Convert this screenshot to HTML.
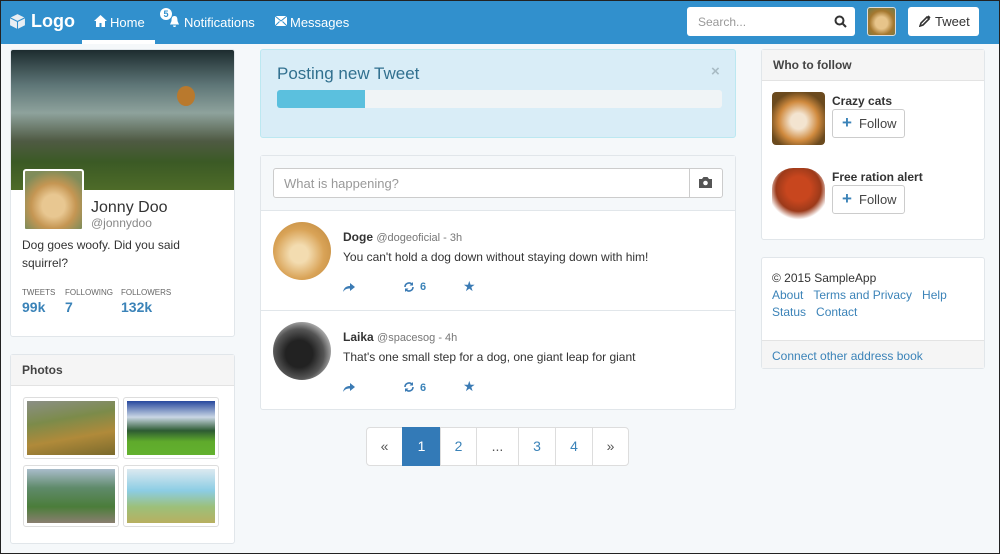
<!DOCTYPE html>
<html><head><meta charset="utf-8"><style>
*{box-sizing:border-box;margin:0;padding:0}
body{width:1000px;height:554px;overflow:hidden;background:#f5f8fa;font-family:"Liberation Sans",sans-serif;font-size:12px;color:#333;position:relative}
.a{position:absolute}
.nav{left:0;top:0;width:1000px;height:44px;background:#3190cd}
.nav span{color:#fff;position:absolute;font-size:13px}
.panel{background:#fff;border:1px solid #e1e6ea;border-radius:3px;position:absolute}
.hd{background:#f5f5f5;border-bottom:1px solid #e3e3e3;font-weight:bold;color:#444;font-size:12px;padding-left:11px}
.blue{color:#3b83b8}
.pg{position:absolute;top:427px;height:39px;border:1px solid #ddd;background:#fff;color:#3b83b8;font-size:14px;text-align:center;line-height:37px}
.btn{position:absolute;border:1px solid #ccc;border-radius:3px;background:#fff;font-size:13px;color:#444}
.ph{position:absolute;border:1px solid #ddd;border-radius:3px;background:#fff;padding:3px}
.ph div{width:100%;height:100%}
</style></head><body>
<div class="a nav">
<svg class="a" style="left:9px;top:13px" width="17" height="17" viewBox="0 0 16 16"><path d="M8 1l7 3.5v7L8 15 1 11.5v-7z" fill="#e8eef3"/><path d="M1 4.5L8 8l7-3.5M8 8v7" stroke="#3190cd" stroke-width="1" fill="none"/></svg>
<span style="left:31px;top:11px;font-size:18px;font-weight:bold">Logo</span>
<svg class="a" style="left:94px;top:15px" width="13" height="12" viewBox="0 0 13 12"><path d="M6.5 0L0 6h2v6h3.5V8h2v4H11V6h2z" fill="#fff"/></svg>
<span style="left:110px;top:15px">Home</span>
<div class="a" style="left:82px;top:40px;width:73px;height:4px;background:#fff"></div>
<div class="a" style="left:160px;top:8px;width:12px;height:12px;border-radius:6px;background:#fff;color:#3190cd;font-size:9px;text-align:center;line-height:12px;font-weight:bold">5</div>
<svg class="a" style="left:168px;top:15px" width="13" height="13" viewBox="0 0 13 13"><path d="M6.5 1C4 1 3.5 3 3.5 6L2 9.5h9L9.5 6C9.5 3 9 1 6.5 1zM5 10.5a1.5 1.5 0 003 0z" fill="#fff"/></svg>
<span style="left:184px;top:15px">Notifications</span>
<svg class="a" style="left:275px;top:16px" width="12" height="10" viewBox="0 0 12 10"><rect width="12" height="10" fill="#fff"/><path d="M0 0l6 5 6-5M0 10l4.5-4.5M12 10L7.5 5.5" stroke="#3190cd" fill="none"/></svg>
<span style="left:290px;top:15px">Messages</span>
<div class="a" style="left:687px;top:7px;width:168px;height:29px;background:#fff;border-radius:3px"><span style="left:11px;top:8px;color:#999;font-size:12px">Search...</span>
<svg class="a" style="left:147px;top:8px" width="13" height="13" viewBox="0 0 13 13"><circle cx="5.5" cy="5.5" r="4" stroke="#333" stroke-width="2" fill="none"/><path d="M8.5 8.5l3.5 3.5" stroke="#333" stroke-width="2"/></svg></div>
<div class="a" style="left:867px;top:7px;width:29px;height:29px;border-radius:3px;border:1px solid #ddd;background:radial-gradient(circle at 50% 55%,#e7c48a 30%,#a5782f 60%,#6d7a4a)"></div>
<div class="a" style="left:908px;top:7px;width:71px;height:29px;background:#fff;border-radius:3px;font-size:13px;color:#333;line-height:29px;padding-left:27px">Tweet</div>
<svg class="a" style="left:919px;top:15px" width="12" height="12" viewBox="0 0 12 12"><path d="M1 11l1-3 6-6 2 2-6 6zM9 1l2 2" stroke="#333" stroke-width="1.6" fill="none"/></svg>
</div>

<div class="panel" style="left:10px;top:49px;width:225px;height:288px;overflow:hidden">
<div style="height:140px;background:linear-gradient(180deg,#1d2c2f 0%,#5e7677 25%,#8ea29c 45%,#4f5a43 65%,#3b5a25 80%,#4e6b28 100%)"></div>
<div class="a" style="left:166px;top:36px;width:18px;height:20px;border-radius:50%;background:#b9792d"></div>
<div class="a" style="left:12px;top:119px;width:61px;height:62px;border:2px solid #fff;border-radius:3px;background:radial-gradient(circle at 50% 60%,#e8c791 25%,#c59653 50%,#7f8c5a 80%)"></div>
<div class="a" style="left:80px;top:149px;font-size:16px;color:#333">Jonny Doo</div>
<div class="a" style="left:80px;top:166px;font-size:12px;color:#888">@jonnydoo</div>
<div class="a" style="left:11px;top:186px;font-size:12px;line-height:18px;width:200px">Dog goes woofy. Did you said squirrel?</div>
<div class="a" style="left:11px;top:238px;font-size:8px;color:#666">TWEETS</div>
<div class="a" style="left:54px;top:238px;font-size:8px;color:#666">FOLLOWING</div>
<div class="a" style="left:110px;top:238px;font-size:8px;color:#666">FOLLOWERS</div>
<div class="a blue" style="left:11px;top:249px;font-size:14px;font-weight:bold">99k</div>
<div class="a blue" style="left:54px;top:249px;font-size:14px;font-weight:bold">7</div>
<div class="a blue" style="left:110px;top:249px;font-size:14px;font-weight:bold">132k</div>
</div>

<div class="panel" style="left:10px;top:354px;width:225px;height:190px">
<div class="hd" style="height:31px;line-height:31px">Photos</div>
<div class="ph" style="left:12px;top:42px;width:96px;height:62px"><div style="background:linear-gradient(170deg,#8b8f86 0%,#7c8b4a 35%,#b08a3a 65%,#7a6a2c)"></div></div>
<div class="ph" style="left:112px;top:42px;width:96px;height:62px"><div style="background:linear-gradient(180deg,#27489e 0%,#c9d6e4 30%,#2d5b33 55%,#5faa2c 75%,#63b12e)"></div></div>
<div class="ph" style="left:12px;top:110px;width:96px;height:62px"><div style="background:linear-gradient(180deg,#a9bccb 0%,#5f8a6a 35%,#4b7d3a 70%,#8a7f70)"></div></div>
<div class="ph" style="left:112px;top:110px;width:96px;height:62px"><div style="background:linear-gradient(180deg,#dce9f0 0%,#8ccde4 40%,#9cc07a 70%,#b8b060)"></div></div>
</div>

<div class="a" style="left:260px;top:49px;width:476px;height:89px;background:#d9edf7;border:1px solid #bce8f1;border-radius:3px">
<div class="a" style="left:16px;top:14px;font-size:17px;color:#31708f">Posting new Tweet</div>
<div class="a" style="left:450px;top:13px;font-size:15px;color:#a9bcc5;font-weight:bold">×</div>
<div class="a" style="left:16px;top:40px;width:445px;height:18px;background:#f0f4f6;border-radius:3px;overflow:hidden"><div style="width:88px;height:100%;background:#5bc0de"></div></div>
</div>

<div class="panel" style="left:260px;top:155px;width:476px;height:255px">
<div style="height:55px;background:#f5f8fa;border-bottom:1px solid #e1e6ea"></div>
<div class="a" style="left:12px;top:12px;width:450px;height:30px;background:#fff;border:1px solid #ccc;border-radius:3px"><span class="a" style="left:10px;top:7px;color:#999;font-size:13px">What is happening?</span>
<div class="a" style="left:415px;top:0;width:33px;height:28px;border-left:1px solid #ccc"></div>
<svg class="a" style="left:425px;top:8px" width="13" height="11" viewBox="0 0 13 11"><path d="M0 2h3l1.5-2h4L10 2h3v9H0z" fill="#555"/><circle cx="6.5" cy="6" r="2.3" fill="#fff"/></svg></div>

<div class="a" style="left:12px;top:66px;width:58px;height:58px;border-radius:50%;background:radial-gradient(circle at 45% 55%,#f3dcb0 20%,#d9a357 55%,#b98339)"></div>
<div class="a" style="left:82px;top:74px;font-size:12px"><b>Doge</b> <span style="color:#777;font-size:11px">@dogeoficial - 3h</span></div>
<div class="a" style="left:82px;top:94px;font-size:12px">You can't hold a dog down without staying down with him!</div>
<div class="a" style="left:0;top:154px;width:474px;border-top:1px solid #e1e6ea"></div>
<div class="a" style="left:12px;top:166px;width:58px;height:58px;border-radius:50%;background:radial-gradient(circle at 45% 55%,#222 30%,#555 55%,#ccc 80%)"></div>
<div class="a" style="left:82px;top:174px;font-size:12px"><b>Laika</b> <span style="color:#777;font-size:11px">@spacesog - 4h</span></div>
<div class="a" style="left:82px;top:194px;font-size:12px">That's one small step for a dog, one giant leap for giant</div>
</div>
<svg class="a" style="left:343px;top:282px" width="12" height="10" viewBox="0 0 12 10"><path d="M0 10C1 5 4 4 7 4V1l5 4-5 4V6.5C4 6.5 2 7 0 10z" fill="#3b7bb4"/></svg>
<svg class="a" style="left:403px;top:281px" width="12" height="12" viewBox="0 0 12 12"><path d="M2 6a4 4 0 017-2.6M10 6a4 4 0 01-7 2.6" stroke="#3b7bb4" stroke-width="1.6" fill="none"/><path d="M10 1v3.5H6.5zM2 11V7.5h3.5z" fill="#3b7bb4"/></svg>
<div class="a blue" style="left:420px;top:281px;font-weight:bold;font-size:11px">6</div>
<div class="a" style="left:463px;top:278px;color:#3b7bb4;font-size:14px">★</div>
<svg class="a" style="left:343px;top:382px" width="12" height="10" viewBox="0 0 12 10"><path d="M0 10C1 5 4 4 7 4V1l5 4-5 4V6.5C4 6.5 2 7 0 10z" fill="#3b7bb4"/></svg>
<svg class="a" style="left:403px;top:381px" width="12" height="12" viewBox="0 0 12 12"><path d="M2 6a4 4 0 017-2.6M10 6a4 4 0 01-7 2.6" stroke="#3b7bb4" stroke-width="1.6" fill="none"/><path d="M10 1v3.5H6.5zM2 11V7.5h3.5z" fill="#3b7bb4"/></svg>
<div class="a blue" style="left:420px;top:382px;font-weight:bold;font-size:11px">6</div>
<div class="a" style="left:463px;top:378px;color:#3b7bb4;font-size:14px">★</div>

<div class="pg" style="left:366px;width:37px;border-radius:4px 0 0 4px;color:#555">«</div>
<div class="pg" style="left:402px;width:39px;background:#337ab7;border-color:#337ab7;color:#fff">1</div>
<div class="pg" style="left:440px;width:37px">2</div>
<div class="pg" style="left:476px;width:43px;color:#555">...</div>
<div class="pg" style="left:518px;width:38px">3</div>
<div class="pg" style="left:555px;width:38px">4</div>
<div class="pg" style="left:592px;width:37px;border-radius:0 4px 4px 0;color:#555">»</div>

<div class="panel" style="left:761px;top:49px;width:224px;height:191px">
<div class="hd" style="height:31px;line-height:31px">Who to follow</div>
<div class="a" style="left:10px;top:42px;width:53px;height:53px;border-radius:4px;background:radial-gradient(circle at 50% 55%,#f3e4d0 20%,#d08a3e 50%,#6b4a1e 75%)"></div>
<div class="a" style="left:70px;top:44px;font-weight:bold;font-size:12px">Crazy cats</div>
<div class="btn" style="left:70px;top:59px;width:73px;height:29px;line-height:27px;padding-left:26px">Follow</div>
<div class="a" style="left:80px;top:66px;color:#3b83b8;font-size:17px;font-weight:bold;line-height:14px">+</div>
<div class="a" style="left:10px;top:118px;width:53px;height:52px;border-radius:40% 40% 10% 10%;background:radial-gradient(circle at 50% 40%,#c8461e 30%,#9c3a1a 55%,#fff 75%)"></div>
<div class="a" style="left:70px;top:120px;font-weight:bold;font-size:12px">Free ration alert</div>
<div class="btn" style="left:70px;top:135px;width:73px;height:29px;line-height:27px;padding-left:26px">Follow</div>
<div class="a" style="left:80px;top:142px;color:#3b83b8;font-size:17px;font-weight:bold;line-height:14px">+</div>
</div>

<div class="panel" style="left:761px;top:257px;width:224px;height:112px">
<div class="a" style="left:10px;top:13px;font-size:12px">© 2015 SampleApp</div>
<div class="a blue" style="left:10px;top:30px;font-size:12px">About &nbsp;&nbsp;Terms and Privacy &nbsp;&nbsp;Help</div>
<div class="a blue" style="left:10px;top:47px;font-size:12px">Status &nbsp;&nbsp;Contact</div>
<div class="a" style="left:0;top:82px;width:222px;height:28px;background:#f5f5f5;border-top:1px solid #e3e3e3"><span class="a blue" style="left:10px;top:8px">Connect other address book</span></div>
</div>
<div class="a" style="left:0;top:0;width:1000px;height:554px;border:1px solid #222;pointer-events:none"></div>
</body></html>
